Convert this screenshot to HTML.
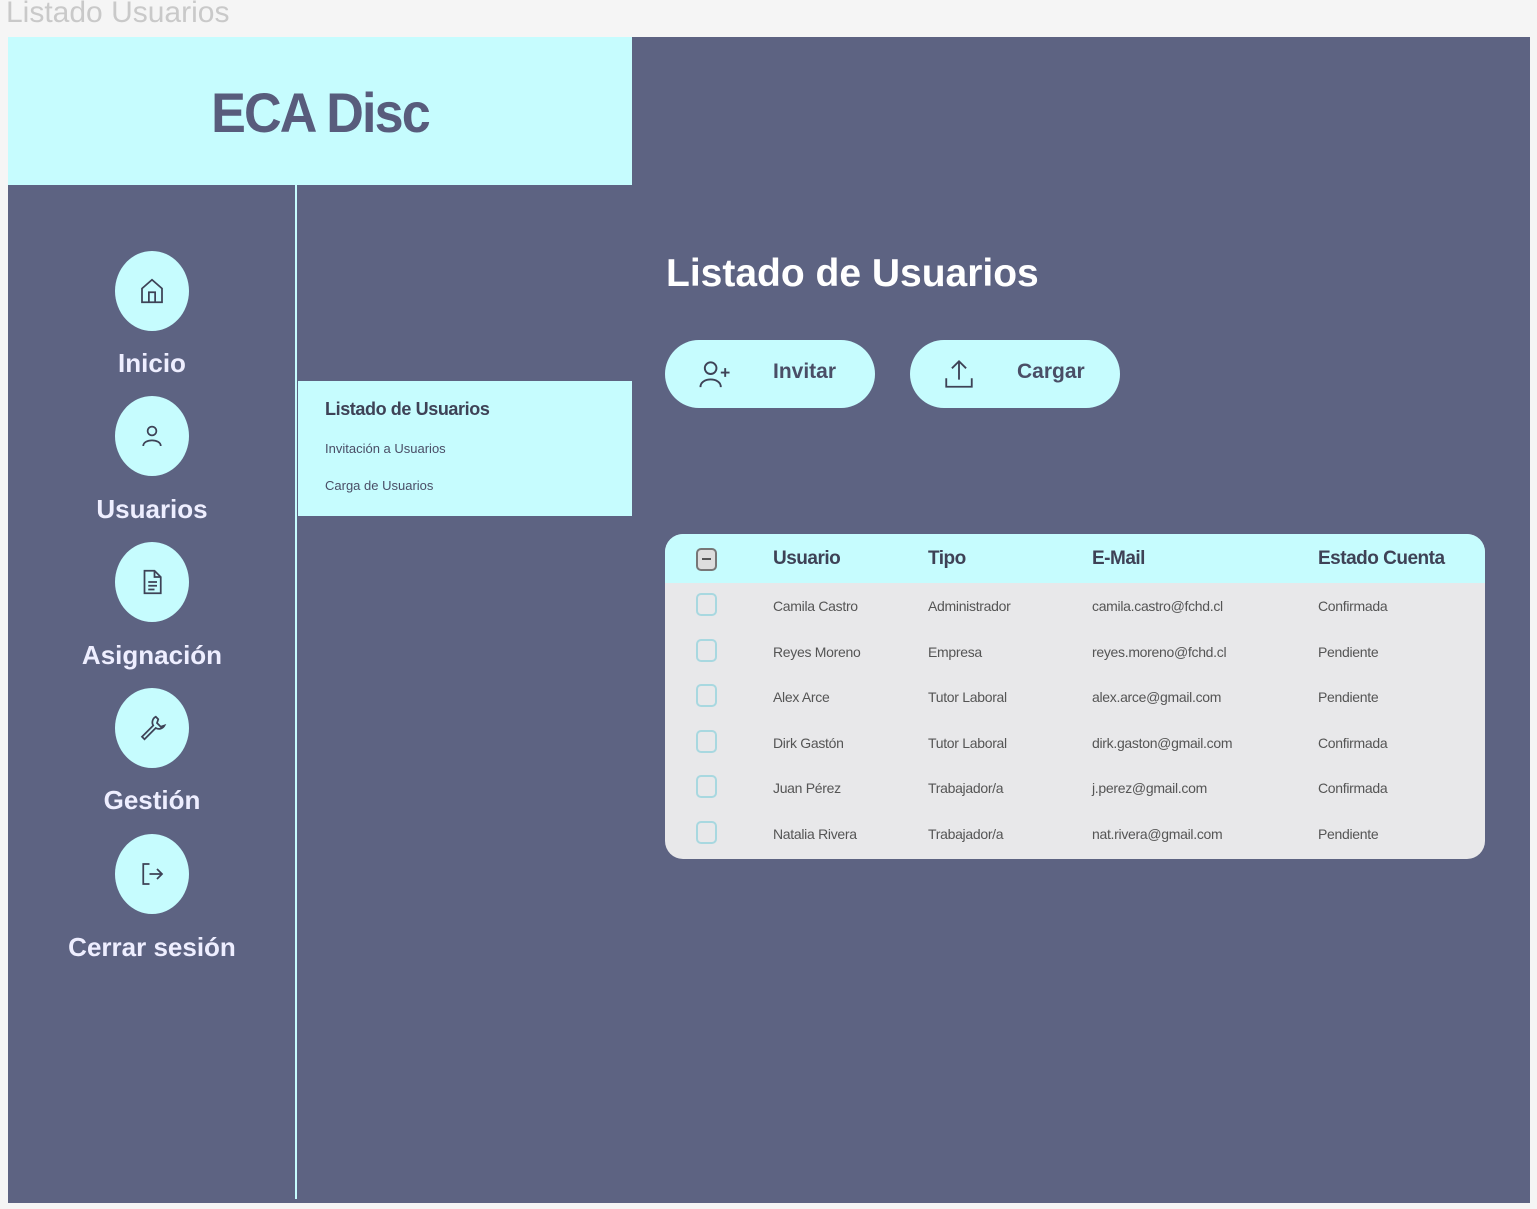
<!DOCTYPE html>
<html><head><meta charset="utf-8"><style>
*{margin:0;padding:0;box-sizing:border-box}
body{width:1537px;height:1209px;background:#f5f5f5;position:relative;overflow:hidden;font-family:"Liberation Sans","DejaVu Sans",sans-serif}
.a{position:absolute}
.top{left:6px;top:-4px;font-size:30px;color:#c9c9c9}
.frame{left:8px;top:37px;width:1522px;height:1166px;background:#5d6382}
.hdr{left:8px;top:37px;width:624px;height:148px;background:#c6fcfe}
.logo{left:8px;top:80px;width:624px;text-align:center;font-size:56px;font-weight:bold;color:#585c7c;letter-spacing:-2px;transform:scaleX(0.93)}
.vline{left:295px;top:185px;width:2px;height:1014px;background:#c6fcfe}
.circ{width:74px;height:80px;border-radius:50%;background:#c6fcfe;left:115px;display:flex;align-items:center;justify-content:center}
.lbl{left:8px;width:288px;text-align:center;color:#eef;font-size:26px;font-weight:bold}
.sub{left:298px;top:381px;width:334px;height:135px;background:#c6fcfe}
.h1{left:666px;top:252px;font-size:39px;font-weight:bold;color:#fff}
.btn{height:68px;width:210px;border-radius:34px;background:#c6fcfe;top:340px}
.btn span{position:absolute;top:20px;font-size:21px;font-weight:bold;color:#4a4e66}
.tbl{left:665px;top:534px;width:820px;height:325px;background:#e8e8ea;border-radius:18px;overflow:hidden}
.th{position:absolute;left:0;top:0;width:820px;height:49px;background:#c6fcfe}
.c{position:absolute;font-size:14px;color:#555;letter-spacing:-0.3px}
.hc{position:absolute;font-size:19px;font-weight:bold;color:#3e4256;top:14px;letter-spacing:-0.5px}
.cb{position:absolute;left:31px;width:21px;height:23px;border:2px solid #a8d8e0;border-radius:5px}
</style></head><body>
<div class="a top">Listado Usuarios</div>
<div class="a frame"></div>
<div class="a hdr"></div>
<div class="a logo">ECA Disc</div>
<div class="a vline"></div>

<div class="a circ" style="top:251px"><svg width="30" height="30" viewBox="0 0 24 24" fill="none" stroke="#3e4256" stroke-width="1.4"><path d="M4 10 L12 3 L20 10 V21 H4 Z"/><path d="M9.5 21 V13 H14.5 V21"/></svg></div>
<div class="a lbl" style="top:348px">Inicio</div>
<div class="a circ" style="top:396px"><svg width="30" height="30" viewBox="0 0 24 24" fill="none" stroke="#3e4256" stroke-width="1.4"><circle cx="12" cy="8" r="3.5"/><path d="M5 20 C5 14 19 14 19 20"/></svg></div>
<div class="a lbl" style="top:494px">Usuarios</div>
<div class="a circ" style="top:542px"><svg width="30" height="30" viewBox="0 0 24 24" fill="none" stroke="#3e4256" stroke-width="1.4"><path d="M6 3 H14 L19 8 V21 H6 Z"/><path d="M14 3 V8 H19 M9 12 H16 M9 15 H16 M9 18 H14"/></svg></div>
<div class="a lbl" style="top:640px">Asignación</div>
<div class="a circ" style="top:688px"><svg width="30" height="30" viewBox="0 0 24 24" fill="none" stroke="#3e4256" stroke-width="1.4"><path d="M15 3 a5 5 0 0 0 -2 7 L4 19 L6 21 L15 12 a5 5 0 0 0 7 -2 L19 11 L16 8 L17 5 Z"/></svg></div>
<div class="a lbl" style="top:785px">Gestión</div>
<div class="a circ" style="top:834px"><svg width="30" height="30" viewBox="0 0 24 24" fill="none" stroke="#3e4256" stroke-width="1.4"><path d="M10 4 H5 V20 H10 M10 12 H20 M16 8 L20 12 L16 16"/></svg></div>
<div class="a lbl" style="top:932px">Cerrar sesión</div>

<div class="a sub">
<div class="a" style="left:27px;top:18px;font-size:18px;font-weight:bold;color:#3e4256;letter-spacing:-0.4px">Listado de Usuarios</div>
<div class="a" style="left:27px;top:60px;font-size:13px;color:#4a4e66">Invitación a Usuarios</div>
<div class="a" style="left:27px;top:97px;font-size:13px;color:#4a4e66">Carga de Usuarios</div>
</div>

<div class="a h1">Listado de Usuarios</div>
<div class="a btn" style="left:665px"><svg style="position:absolute;left:32px;top:18px" width="36" height="32" viewBox="0 0 24 22" fill="none" stroke="#3e4256" stroke-width="1.3"><circle cx="9" cy="7" r="4"/><path d="M2 20 C2 13 16 13 16 20 M19 7 V13 M16 10 H22"/></svg><span style="left:108px">Invitar</span></div>
<div class="a btn" style="left:910px"><svg style="position:absolute;left:32px;top:17px" width="34" height="34" viewBox="0 0 24 24" fill="none" stroke="#3e4256" stroke-width="1.3"><path d="M12 16 V3 M7 8 L12 3 L17 8 M3 15 V21 H21 V15"/></svg><span style="left:107px">Cargar</span></div>

<div class="a tbl">
<div class="th"></div>
<div class="cb" style="top:14px;border-color:#777;background:#ddd"><div style="position:absolute;left:4px;top:8px;width:9px;height:2px;background:#555"></div></div>
<div class="hc" style="left:108px">Usuario</div>
<div class="hc" style="left:263px">Tipo</div>
<div class="hc" style="left:427px">E-Mail</div>
<div class="hc" style="left:653px">Estado Cuenta</div>

<div class="cb" style="top:59px"></div><div class="c" style="left:108px;top:64px">Camila Castro</div><div class="c" style="left:263px;top:64px">Administrador</div><div class="c" style="left:427px;top:64px">camila.castro@fchd.cl</div><div class="c" style="left:653px;top:64px">Confirmada</div>
<div class="cb" style="top:105px"></div><div class="c" style="left:108px;top:110px">Reyes Moreno</div><div class="c" style="left:263px;top:110px">Empresa</div><div class="c" style="left:427px;top:110px">reyes.moreno@fchd.cl</div><div class="c" style="left:653px;top:110px">Pendiente</div>
<div class="cb" style="top:150px"></div><div class="c" style="left:108px;top:155px">Alex Arce</div><div class="c" style="left:263px;top:155px">Tutor Laboral</div><div class="c" style="left:427px;top:155px">alex.arce@gmail.com</div><div class="c" style="left:653px;top:155px">Pendiente</div>
<div class="cb" style="top:196px"></div><div class="c" style="left:108px;top:201px">Dirk Gastón</div><div class="c" style="left:263px;top:201px">Tutor Laboral</div><div class="c" style="left:427px;top:201px">dirk.gaston@gmail.com</div><div class="c" style="left:653px;top:201px">Confirmada</div>
<div class="cb" style="top:241px"></div><div class="c" style="left:108px;top:246px">Juan Pérez</div><div class="c" style="left:263px;top:246px">Trabajador/a</div><div class="c" style="left:427px;top:246px">j.perez@gmail.com</div><div class="c" style="left:653px;top:246px">Confirmada</div>
<div class="cb" style="top:287px"></div><div class="c" style="left:108px;top:292px">Natalia Rivera</div><div class="c" style="left:263px;top:292px">Trabajador/a</div><div class="c" style="left:427px;top:292px">nat.rivera@gmail.com</div><div class="c" style="left:653px;top:292px">Pendiente</div>
</div>
</body></html>
